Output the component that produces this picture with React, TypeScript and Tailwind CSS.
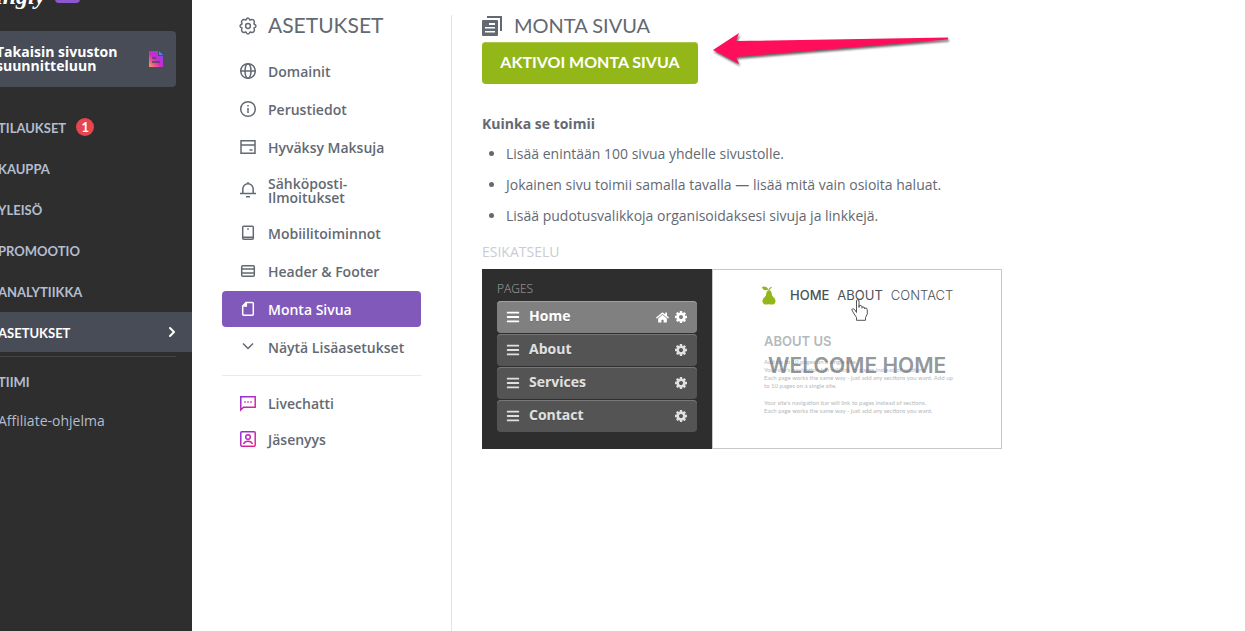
import React from 'react';
import { FaBars, FaHome } from 'react-icons/fa';
import { LuChevronRight } from 'react-icons/lu';

interface NavItem {
  label: string;
  badge?: number;
  active?: boolean;
}

interface SettingsItem {
  label: React.ReactNode;
  icon: React.ReactNode;
  active?: boolean;
  tall?: boolean;
}

const Icon: React.FC<{ children: React.ReactNode; stroke?: string }> = ({ children, stroke = 'currentColor' }) => (
  <svg
    className="w-[18px] h-[18px] shrink-0"
    viewBox="0 0 18 18"
    fill="none"
    stroke={stroke}
    strokeWidth={1.5}
    aria-hidden="true"
  >
    {children}
  </svg>
);

const GearIcon = () => (
  <Icon>
    <path
      strokeLinejoin="round"
      d="M9 1Q10.200 1 10.800 3Q13.200 1.900 14.400 2.900 15.900 4 15 7Q17 7.800 17 9T15 11Q16 13.600 14.700 14.700 13.600 16 11 15 10.200 17 9 17T7 15Q4.400 16 3.300 14.700 2 13.600 3 11 1 10.200 1 9T3 7Q2 4.400 3.300 3.300 4.400 2 7 3 7.800 1 9 1Z"
    />
    <circle cx="9" cy="9" r="2.4" />
  </Icon>
);

const CogIcon = () => (
  <svg className="h-[14px] w-3" viewBox="0 0 1536 1792" fill="currentColor" aria-hidden="true">
    <path d="M1024 896q0-106-75-181t-181-75-181 75-75 181 75 181 181 75 181-75 75-181zm512-109v222q0 12-8 23t-20 13l-185 28q-19 54-39 91 35 50 107 138 10 12 10 25t-9 23q-27 37-99 108t-94 71q-12 0-26-9l-138-108q-44 23-91 38-16 136-29 186-7 28-36 28h-222q-14 0-24.500-8.500t-11.500-21.500l-28-184q-49-16-90-37l-141 107q-10 9-25 9-14 0-25-11-126-114-165-168-7-10-7-23 0-12 8-23 15-21 51-66.500t54-70.500q-27-50-41-99l-183-27q-13-2-21-12.500t-8-23.500v-222q0-12 8-23t19-13l186-28q14-46 39-92-40-57-107-138-10-12-10-24 0-10 9-23 26-36 98.500-107.500t94.500-71.500q13 0 26 10l138 107q44-23 91-38 16-136 29-186 7-28 36-28h222q14 0 24.500 8.500t11.500 21.500l28 184q49 16 90 37l142-107q9-9 24-9 13 0 25 10 129 119 165 170 7 8 7 22 0 12-8 23-15 21-51 66.500t-54 70.500q26 50 41 98l183 28q13 2 21 12.500t8 23.500z" />
  </svg>
);

const navItems: NavItem[] = [
  { label: 'TILAUKSET', badge: 1 },
  { label: 'KAUPPA' },
  { label: 'YLEISÖ' },
  { label: 'PROMOOTIO' },
  { label: 'ANALYTIIKKA' },
  { label: 'ASETUKSET', active: true },
];

const settingsItems: SettingsItem[] = [
  {
    label: 'Domainit',
    icon: (
      <Icon>
        <circle cx="9" cy="9" r="7.3" />
        <ellipse cx="9" cy="9" rx="3" ry="7.3" />
        <path d="M1.7 9h14.6" />
      </Icon>
    ),
  },
  {
    label: 'Perustiedot',
    icon: (
      <Icon>
        <circle cx="9" cy="9" r="7.3" />
        <path d="M9 8v5M9 5v1.6" />
      </Icon>
    ),
  },
  {
    label: 'Hyväksy Maksuja',
    icon: (
      <Icon>
        <path d="M2 2.7h14v12.6H2zM2 7h14M10.5 12h3" />
      </Icon>
    ),
  },
  {
    label: (
      <>
        Sähköposti-
        <br />
        Ilmoitukset
      </>
    ),
    tall: true,
    icon: (
      <Icon>
        <path d="M1 12.5h16M3.8 12.5V8a5.2 5.2 0 0 1 10.4 0v4.5M9 1v2M7 15.8h4" />
      </Icon>
    ),
  },
  {
    label: 'Mobiilitoiminnot',
    icon: (
      <Icon>
        <rect x="3.7" y="2.2" width="10.6" height="13" rx="1" />
        <path d="M4 13.3h10M8.2 5h1.6" />
      </Icon>
    ),
  },
  {
    label: 'Header & Footer',
    icon: (
      <Icon>
        <rect x="2.7" y="3.7" width="12.6" height="10.6" rx="1" />
        <path d="M3 7h12M3 11h12" />
      </Icon>
    ),
  },
  {
    label: 'Monta Sivua',
    active: true,
    icon: (
      <Icon>
        <path d="M7 2.5h6.3a1 1 0 0 1 1 1v10.8a1 1 0 0 1-1 1H4.7a1 1 0 0 1-1-1V6zM7.3 2.5V6H3.7" />
      </Icon>
    ),
  },
  {
    label: 'Näytä Lisäasetukset',
    icon: (
      <Icon>
        <path d="M4 5.5l5 5 5-5" />
      </Icon>
    ),
  },
];

const helpItems: SettingsItem[] = [
  {
    label: 'Livechatti',
    icon: (
      <Icon stroke="url(#brand)">
        <path d="M1.8 16V2.8h14.4v10.4H4.5z" />
        <path d="M5 7.5h2v1H5zM8 7.5h2v1H8zM11 7.5h2v1h-2z" fill="#c41fb4" stroke="none" />
      </Icon>
    ),
  },
  {
    label: 'Jäsenyys',
    icon: (
      <Icon stroke="url(#brand)">
        <rect x="1.8" y="1.8" width="14.4" height="14.4" rx="1" />
        <circle cx="9" cy="7" r="2.3" />
        <path d="M4.5 14c1-2 2.600-2.700 4.500-2.700s3.500.7 4.500 2.700" />
      </Icon>
    ),
  },
];

const pages = ['Home', 'About', 'Services', 'Contact'];

const Sidebar = () => (
  <aside className="w-48 shrink-0 overflow-hidden bg-[#2e2e2e] text-[#b3bdcf]">
    <div className="flex h-[31px] items-start overflow-hidden">
      <span className="-mt-4 -ml-12 shrink-0 font-['Liberation_Serif',serif] text-[24px] leading-6 font-bold italic text-white">
        strikingly
      </span>
      <span className="ml-2.5 -mt-3 h-[15px] w-[25px] shrink-0 rounded-sm bg-[#8e56cf]" />
    </div>
    <button
      type="button"
      className="-ml-1 flex h-14 w-[180px] items-center justify-between rounded bg-[#484c57] pr-3 text-left text-[14px] leading-[14px] font-bold text-white"
    >
      <span>
        Takaisin sivuston
        <br />
        suunnitteluun
      </span>
      <svg className="h-4 w-4" viewBox="0 0 16 16" aria-hidden="true">
        <path d="M1 0h9v5h5v11H1z" fill="url(#doc)" />
        <path d="M11 0l4 4h-4z" fill="#5a7df0" />
        <path d="M4 7h4M4 11h8" stroke="#484c57" strokeWidth="1.6" />
      </svg>
    </button>
    <nav className="mt-5 font-[Lato,sans-serif] text-[13px] leading-4 font-bold">
      <ul className="flex flex-col gap-px">
        {navItems.map((item) => (
          <li key={item.label}>
            <a
              href="#"
              className={`-ml-1 flex h-10 items-center pl-0.5 ${item.active ? 'bg-[#484c57] text-white' : ''}`}
            >
              <span className="pt-0.5">{item.label}</span>
              {item.badge && (
                <span className="ml-2.5 flex h-[18px] w-[18px] items-center justify-center rounded-full bg-[#e8454f] text-white">
                  {item.badge}
                </span>
              )}
              {item.active && <LuChevronRight className="mr-3 ml-auto h-4 w-4" strokeWidth={3} />}
            </a>
          </li>
        ))}
      </ul>
      <div className="mt-1 mr-4 mb-1 border-t border-[#444444]" />
      <a href="#" className="-ml-1 flex h-10 items-center pl-0.5">
        <span className="pt-0.5">TIIMI</span>
      </a>
      <a href="#" className="-ml-1 flex h-10 items-center pl-0.5 font-['Open_Sans',sans-serif] text-[14px] font-normal">
        Affiliate-ohjelma
      </a>
    </nav>
  </aside>
);

const SettingsLink: React.FC<{ item: SettingsItem }> = ({ item }) => (
  <a
    href="#"
    className={`flex items-center gap-[11px] rounded pl-[17px] text-[14px] leading-[14px] font-semibold ${
      item.tall ? 'h-[46px]' : 'h-9'
    } ${item.active ? 'bg-[#8159bb] text-white' : ''}`}
  >
    {item.icon}
    <span className="pt-0.5">{item.label}</span>
  </a>
);

const SettingsMenu = () => (
  <section className="mt-[15px] ml-[30px] w-[230px] shrink-0 border-r border-[#e2e4e7] pr-[30px]">
    <h1 className="flex h-[22px] items-center gap-[11px] pl-[17px] font-[Lato,sans-serif] text-[21px] leading-5">
      <GearIcon />
      <span className="pb-0.5">ASETUKSET</span>
    </h1>
    <nav className="mt-4 flex flex-col gap-0.5">
      {settingsItems.map((item, i) => (
        <SettingsLink key={i} item={item} />
      ))}
    </nav>
    <nav className="mt-[10px] flex flex-col border-t border-[#e8eaed] pt-[9px]">
      {helpItems.map((item, i) => (
        <SettingsLink key={i} item={item} />
      ))}
    </nav>
  </section>
);

const Preview = () => (
  <div className="flex h-[180px] w-[520px]">
    <div className="w-[230px] bg-[#2e2e2e] px-[15px] pt-3">
      <div className="h-5 text-[12px] leading-4 font-light text-[#a5a5a5]">PAGES</div>
      <ul className="flex flex-col gap-px">
        {pages.map((page, i) => (
          <li
            key={page}
            className={`flex h-8 items-center rounded-sm pr-[10px] pl-[9px] text-[14px] leading-5 font-bold text-shadow-2xs ${
              i === 0
                ? 'bg-[#808080] text-white shadow-[inset_0_1px_0_#a0a0a0]'
                : 'bg-[#545454] text-[#e0e0e0] shadow-[inset_0_1px_0_#777777]'
            }`}
          >
            <FaBars className="h-[14px] w-[14px]" />
            <span className="ml-[9px] flex-1 pb-0.5">{page}</span>
            {i === 0 && <FaHome className="mr-[6px] h-[13px] w-[13px]" />}
            <CogIcon />
          </li>
        ))}
      </ul>
    </div>
    <div className="flex-1 border border-[#c8c8c8] pt-[15px] pl-12 font-[Inter,sans-serif]">
      <div className="flex h-5 items-center text-[13px] leading-5 text-[#4b5257]">
        <svg className="mr-[13px] h-[19px] w-4" viewBox="0 0 16 19" fill="#93b719" aria-hidden="true">
          <path d="M8 4.500C5.500 4 5.500 7 5 9 C4.500 11 1.500 12 1.500 15 C1.500 18 4 19 6 18.500 Q8 18 10 18.500 C12 19 14.500 18 14.500 15 C14.500 12 11.500 11 11 9 C10.500 7 10.500 4 8 4.500Z" />
          <path d="M.8 1.200C3-.2 6 .3 7.500 3.600 4.500 5 2 4 .8 1.200ZM7.200 4.500Q8 1.500 10.300.7L10.800 1.700Q8.700 2.500 8.200 5Z" />
        </svg>
        <span className="font-medium">HOME</span>
        <span className="relative ml-2">
          ABOUT
          <svg className="absolute top-[14px] left-[14px] h-[22px] w-[17px]" viewBox="0 0 17 22" fill="white" stroke="#555555" aria-hidden="true">
            <path d="M5.500 13.500V2Q5.500.7 6.700.7T8 2V8.500M8 8.500V6.500Q10.500 5.500 11 8V9.500M11 8Q13.500 7 13.800 10M13.800 9Q16.300 8.500 16.300 11V15L14.500 18.500V21.300H5.500V18.500L2.500 14L.7 10.500Q2 8.500 4 11L5.500 13.500" />
          </svg>
        </span>
        <span className="ml-2 font-light">CONTACT</span>
      </div>
      <div className="mt-[26px] pl-[3px] text-[#b5b9bc]">
        <h3 className="h-5 text-[13px] leading-5 font-semibold">ABOUT US</h3>
        <div className="relative pt-[7px] font-[Lato,sans-serif] text-[6px] leading-[8px] whitespace-nowrap">
          <p>Add up to 10 pages on a single site.</p>
          <p>Your site's navigation bar will link to pages instead of sections.</p>
          <p>Each page works the same way - just add any sections you want. Add up</p>
          <p>to 10 pages on a single site.</p>
          <p className="mt-[9px]">Your site's navigation bar will link to pages instead of sections.</p>
          <p>Each page works the same way - just add any sections you want.</p>
          <h2 className="absolute top-[3px] left-1 font-[Inter,sans-serif] text-[21px] leading-6 font-semibold text-[#555d63]/65">
            WELCOME HOME
          </h2>
        </div>
      </div>
    </div>
  </div>
);

const Main = () => (
  <main className="min-w-0 flex-1 pt-[15px] pl-[30px]">
    <h2 className="flex h-[22px] items-center gap-3 font-[Lato,sans-serif] text-[20px] leading-5">
      <svg className="h-5 w-5" viewBox="0 0 20 20" fill="currentColor" aria-hidden="true">
        <path d="M5 0H20V15H18V2H5z" />
        <path fillRule="evenodd" d="M1 4H15Q16 4 16 5V19Q16 20 15 20H1Q0 20 0 19V5Q0 4 1 4ZM7 7V9H13V7ZM3 11V12.600H13V11ZM3 15V16.600H13V15Z" />
      </svg>
      <span className="pb-0.5">MONTA SIVUA</span>
    </h2>
    <div className="relative mt-[5px] flex">
      <button
        type="button"
        className="h-[42px] w-[216px] rounded bg-[#93b719] pb-0.5 font-[Lato,sans-serif] text-[16px] font-bold text-white shadow-[inset_0_1px_0_#a9c64a]"
      >
        AKTIVOI MONTA SIVUA
      </button>
      <svg className="absolute -top-3 left-[228px] h-10 w-[244px] drop-shadow-[1px_2px_1px_rgba(0,0,0,0.6)]" viewBox="0 0 244 40" fill="#ff0f5b" aria-hidden="true">
        <path d="M3 20L29 3 26 11 238 7.500V9.500L26 27 29 34Z" />
      </svg>
    </div>
    <h3 className="mt-[30px] text-[14px] leading-5 font-bold">Kuinka se toimii</h3>
    <ul className="mt-[10px] flex list-disc flex-col gap-[11px] pl-6 text-[14px] leading-5">
      <li>Lisää enintään 100 sivua yhdelle sivustolle.</li>
      <li>Jokainen sivu toimii samalla tavalla — lisää mitä vain osioita haluat.</li>
      <li>Lisää pudotusvalikkoja organisoidaksesi sivuja ja linkkejä.</li>
    </ul>
    <h4 className="mt-4 mb-[7px] text-[14px] leading-5 text-[#c9ccd1]">ESIKATSELU</h4>
    <Preview />
  </main>
);

export default function App() {
  return (
    <div className="flex min-h-screen bg-white font-['Open_Sans',sans-serif] text-[#636972]">
      {/* Shared gradients */}
      <svg className="absolute h-0 w-0" aria-hidden="true">
        <defs>
          <linearGradient id="brand" gradientUnits="userSpaceOnUse" x1="2" y1="2" x2="16" y2="16">
            <stop offset="0" stopColor="#8b30d9" />
            <stop offset="1" stopColor="#f0208c" />
          </linearGradient>
          <linearGradient id="doc" x1="0" y1="1" x2="1" y2="0">
            <stop offset="0" stopColor="#ffa040" />
            <stop offset=".45" stopColor="#d428c8" />
            <stop offset="1" stopColor="#6a50f0" />
          </linearGradient>
        </defs>
      </svg>
      <Sidebar />
      <SettingsMenu />
      <Main />
    </div>
  );
}
